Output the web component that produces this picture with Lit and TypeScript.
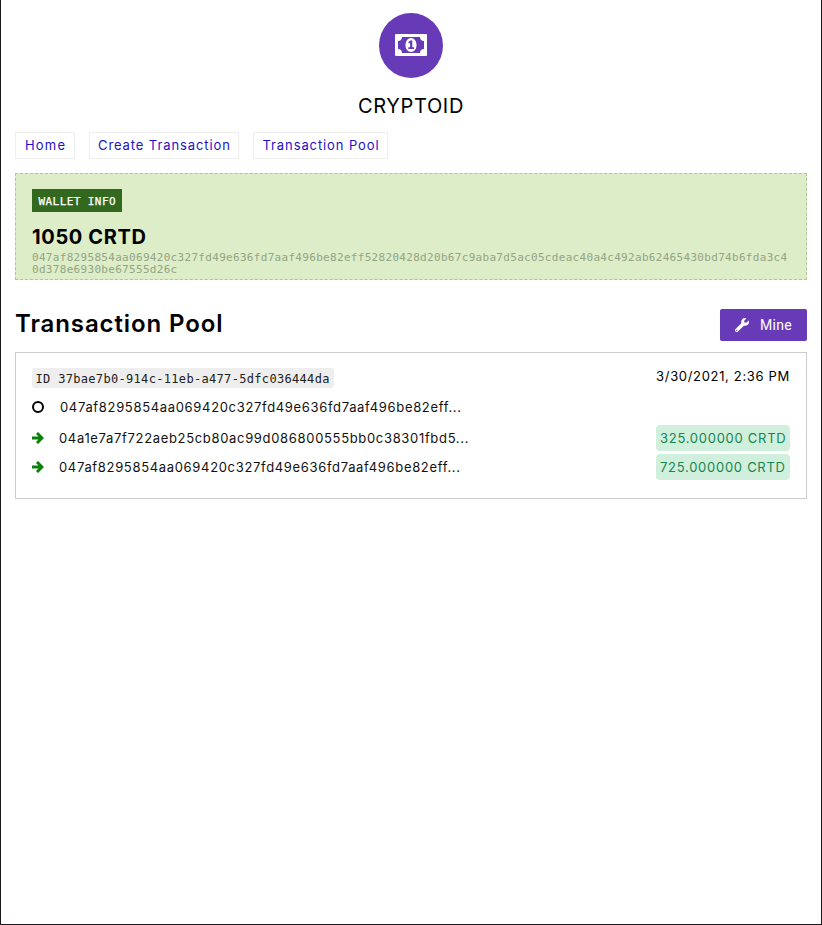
import { LitElement, html, css, svg } from "lit";
import { customElement } from "lit/decorators.js";

const ADDRESS =
  "047af8295854aa069420c327fd49e636fd7aaf496be82eff52820428d20b67c9aba7d5ac05cdeac40a4c492ab62465430bd74b6fda3c40d378e6930be67555d26c";

const outputs = [
  { to: "04a1e7a7f722aeb25cb80ac99d086800555bb0c38301fbd5...", amount: "325.000000 CRTD" },
  { to: "047af8295854aa069420c327fd49e636fd7aaf496be82eff...", amount: "725.000000 CRTD" },
];

const bill = svg`<svg viewBox="0 0 32 22" width="32" height="22">
  <rect width="32" height="22" rx="1" fill="#fff"/>
  <path d="M7 3H25A4.2 4.2 0 0 0 29 7V15A4.2 4.2 0 0 0 25 19H7A4.2 4.2 0 0 0 3 15V7A4.2 4.2 0 0 0 7 3Z" fill="#673ab7"/>
  <ellipse cx="16" cy="11" rx="5.6" ry="6.9" fill="#fff"/>
  <path d="M15.1 6.6H17.3V13.2H19V15H13.3V13.2H15.1V9.2H13.5V7.8Q14.6 7.5 15.1 6.6Z" fill="#673ab7"/>
</svg>`;

const wrench = svg`<svg viewBox="0 0 512 512" width="14" height="14">
  <path fill="#fff" d="M507.73 109.1c-2.24-9.03-13.54-12.09-20.12-5.51l-74.36 74.36-67.88-11.31-11.31-67.88 74.36-74.36c6.62-6.62 3.43-17.9-5.66-20.16-47.38-11.74-99.55.91-136.58 37.93-39.64 39.64-50.55 97.1-34.05 147.2L18.74 402.76c-24.99 24.99-24.99 65.51 0 90.5 24.99 24.99 65.51 24.99 90.5 0l213.21-213.21c50.12 16.71 107.47 5.68 147.37-34.22 37.07-37.07 49.7-89.32 37.91-136.73zM64 472c-13.25 0-24-10.75-24-24 0-13.26 10.75-24 24-24s24 10.74 24 24c0 13.25-10.75 24-24 24z"/>
</svg>`;

const arrow = svg`<svg class="mark" viewBox="0 0 12 12" width="12" height="12">
  <path fill="none" stroke="#0a800a" stroke-width="2.9" d="M0 6H10M5 1L10 6L5 11"/>
</svg>`;

@customElement("app-root")
export class AppRoot extends LitElement {
  static styles = css`
    :host {
      display: block;
      box-sizing: border-box;
      height: 925px;
      padding: 13px 14px 0;
      border: 1px solid #1b191d;
      border-top: 0;
      background: #fff;
      color: #000;
      font-family: "Inter", "Liberation Sans", sans-serif;
      font-size: 13px;
    }
    * { box-sizing: border-box; }
    svg { display: block; flex: none; }
    header { display: flex; flex-direction: column; align-items: center; }
    .logo {
      width: 64px; height: 65px; border-radius: 50%; background: #673ab7;
      display: flex; align-items: center; justify-content: center; padding-bottom: 2px;
    }
    .brand { margin-top: 15px; font-size: 20px; line-height: 26px; letter-spacing: 0.65px; white-space: nowrap; }
    nav { display: flex; gap: 14px; margin-top: 13px; }
    .link {
      height: 27px; border: 1px solid #eee; padding-left: 9px; line-height: 25px;
      color: #1d12c8; white-space: nowrap; letter-spacing: 0.9px;
    }
    .home { width: 60px; letter-spacing: 1.2px; }
    .create { width: 150px; padding-left: 8px; }
    .pool { width: 135px; padding-left: 8.5px; }
    .wallet {
      height: 107px; margin-top: 14px; padding: 15px 16px 0;
      border: 1px dashed #aec797; background: #dcedc8;
    }
    .badge {
      width: 90px; height: 23px; padding-left: 6.5px; background: #33691e; color: #fff;
      font: 11px/25px "DejaVu Sans Mono", monospace; letter-spacing: 0.42px; white-space: nowrap;
      -webkit-text-stroke: 0.25px #fff;
    }
    .balance { margin-top: 13px; font-size: 20px; font-weight: 700; line-height: 24px; letter-spacing: 0.65px; }
    .address {
      margin-top: 3px; font: 11px/12px "DejaVu Sans Mono", monospace;
      letter-spacing: 0.308px; color: #94a484; word-break: break-all;
    }
    .title { display: flex; justify-content: space-between; margin-top: 29px; height: 32px; }
    h1 { margin: 0; font-size: 24px; font-weight: 600; line-height: 30px; letter-spacing: 0.9px; }
    button {
      width: 87px; height: 32px; padding: 0 0 0 15px; border: 0; border-radius: 2px;
      display: flex; align-items: center; gap: 11px; background: #673ab7; color: #fff;
      font: 400 14px "Roboto", sans-serif; letter-spacing: 0.3px;
    }
    .card { height: 147px; margin-top: 11px; padding: 15px 16px 0; border: 1px solid #ccc; }
    .row { display: flex; align-items: center; white-space: nowrap; }
    .meta { justify-content: space-between; height: 20px; margin-bottom: 10px; }
    .id {
      width: 302px; height: 20px; padding-left: 3.5px; border-radius: 3px; background: #eee; color: #222;
      font: 12px/22px "DejaVu Sans Mono", monospace; letter-spacing: 0.32px;
    }
    .date { line-height: 16px; margin-bottom: 4px; letter-spacing: 0.67px; }
    .from { height: 18px; margin-bottom: 9px; gap: 16px; }
    .ring { width: 12px; height: 12px; border: 2px solid #000; border-radius: 50%; flex: none; }
    .out { height: 26px; margin-bottom: 3px; gap: 15px; }
    .mark { margin-bottom: 1px; }
    .hash { letter-spacing: 0.67px; color: #111; }
    .amount {
      width: 134px; height: 26px; padding-left: 4px; margin-left: auto; border-radius: 4px;
      background: #d1efdd; color: #16864f; line-height: 26px; letter-spacing: 0.73px;
    }
  `;

  render() {
    return html`
      <header>
        <div class="logo">${bill}</div>
        <div class="brand">CRYPTOID</div>
      </header>
      <nav>
        <a class="link home">Home</a>
        <a class="link create">Create Transaction</a>
        <a class="link pool">Transaction Pool</a>
      </nav>
      <section class="wallet">
        <div class="badge">WALLET INFO</div>
        <div class="balance">1050 CRTD</div>
        <div class="address">${ADDRESS}</div>
      </section>
      <div class="title">
        <h1>Transaction Pool</h1>
        <button>${wrench}<span>Mine</span></button>
      </div>
      <section class="card">
        <div class="row meta">
          <span class="id">ID 37bae7b0-914c-11eb-a477-5dfc036444da</span>
          <span class="date">3/30/2021, 2:36 PM</span>
        </div>
        <div class="row from">
          <span class="ring"></span>
          <span class="hash">047af8295854aa069420c327fd49e636fd7aaf496be82eff...</span>
        </div>
        ${outputs.map(
          (o) => html`<div class="row out">
            ${arrow}<span class="hash">${o.to}</span>
            <span class="amount">${o.amount}</span>
          </div>`
        )}
      </section>
    `;
  }
}
